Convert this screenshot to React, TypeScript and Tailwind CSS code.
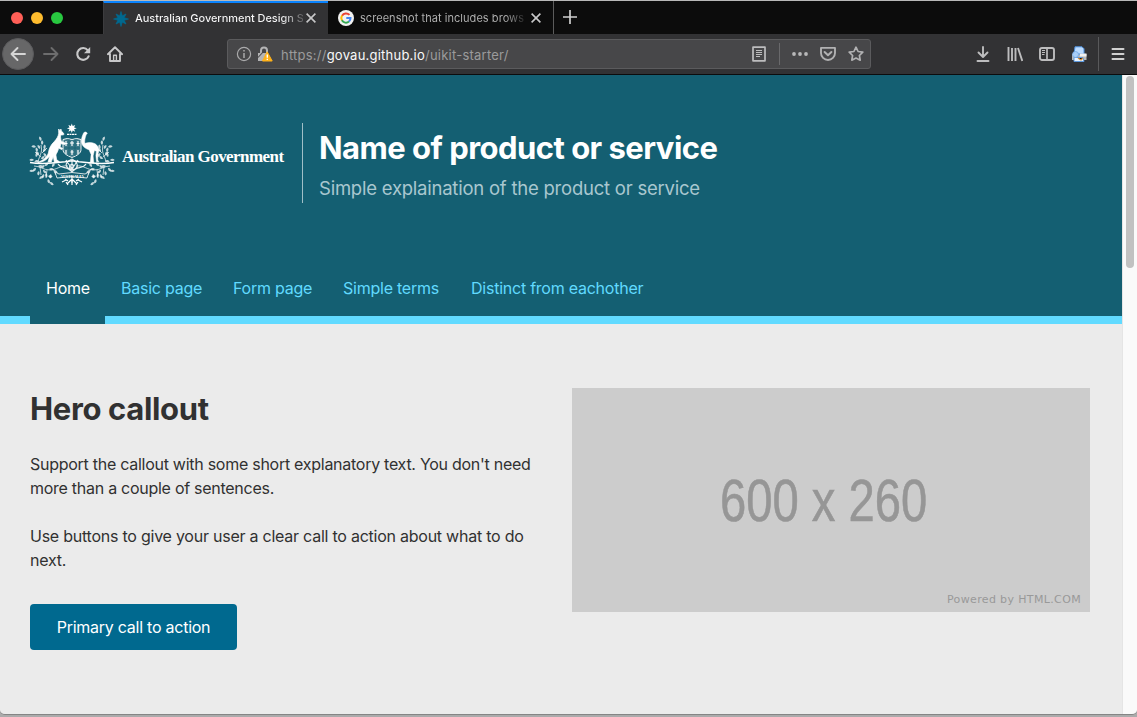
import React from "react";

const leaf = "M0 0c1-2 3-2.4 4.400-1.600C3.800 .6 1.800 1.200 0 0Z";
const sprigs: [number, number, number][] = [
  [36, 156, -60], [39, 154, -110], [41, 158, -20], [37, 151, -80], [40, 148, -100], [36, 146, -150], [42, 144, -70],
  [43, 151, -40], [39, 160, 190], [46, 156, -100], [34, 159, 200], [41, 140, -90], [44, 148, -60],
  [36, 167, 150], [39, 170, 120], [43, 169, 60], [46, 172, 100], [49, 168, 20], [51, 173, 120], [43, 175, 160],
  [48, 178, 90], [52, 166, -40], [34, 170, 200], [54, 169, 60], [45, 165, -30], [50, 181, 60],
  [38, 165, 20], [41, 167, -20], [48, 175, 30], [44, 173, 130],
];

function CoatOfArms() {
  const side = (
    <g>
      <path d="M34 165c6 0 9 4 16 4s10-5 18-4M38 161c1-6 5-9 3-17M41 156l-6-5M42 152l5-5M40 166l1 8M47 169l-1 8M53 168l3 6" fill="none" stroke="white" strokeWidth=".7" />
      {sprigs.map(([x, y, r], i) => (
        <path key={i} d={leaf} fill="white" opacity=".75" transform={`translate(${x} ${y}) rotate(${r})`} />
      ))}
    </g>
  );
  return (
    <svg viewBox="29 122 86 64" className="h-16 w-[86px] shrink-0" aria-label="Commonwealth Coat of Arms">
      {side}
      <g transform="translate(144 0) scale(-1 1)">{side}</g>
      <path d="M71.800 122.500l.9 2.600 2.500-1.200-1.100 2.500 2.600.9-2.600.9 1.100 2.500-2.500-1.100-.9 2.500-.9-2.500-2.500 1.100 1.100-2.500-2.600-.9 2.600-.9-1.100-2.500 2.500 1.200z" fill="white" />
      <path d="M67 133.300h10" stroke="white" strokeWidth="1.300" strokeDasharray="2 .5" />
      <path d="M63 138.500q4-2 9 0q5-2 9 0v10c0 4-4 6-9 8c-5-2-9-4-9-8z" fill="#3a7889" stroke="white" strokeWidth=".9" />
      <path d="M64 147h16M69 138v17M75 138v17" stroke="#145f72" strokeWidth=".8" />
      <path d="M66 140v5M64.500 142.500h3M72 140v5M70 142h4M78 140v5M76.500 142.500h3M66 149v4M72 149v5M78 149v4M70.500 151h3" stroke="white" strokeWidth="1.200" />
      <path d="M58.600 128l1.500 1.700.8-1.700.6 2.300c1.200.7 2.200 1.900 2.600 3-.8.9-2.200.6-3.300.6-.5 1.500-.2 3.800.5 6.400l4 1.800-.4 1.400-4-.8-.8 3.300 2.600 1.500-.8 1-3.300-1.200c-.6 3-1.900 4.600-2.700 6.600l.7 4.700 3 2.300h-5.300l-1-5.400-2.100 5.600h-3.200l1.700-6c-3 3.600-6 6-12 6.400 6-2.500 9-5.500 10.700-9.500.5-4.600 2.600-8.200 5.700-11.200 2.500-2.800 4.100-5 4.600-8.500z" fill="white" stroke="white" strokeWidth=".7" />
      <path d="M87.300 132.600c-.3-1.800-2.900-2.300-3.700-.6-2.200 4.300-2.900 8.300-1.600 11.300 1.200 3 4.500 4.800 7 5.400l2.100 4.700-.7 7.400-2 1.300h5.400l-.7-7.200 1.300-5.400 2 .7-.5 4.500.7 6.100h2.400l-1.300-1.700.3-6.200 1-3.300c-.3-4.600-3.600-7.900-8.600-8-2.500 0-4.200.4-5.500 1-.6-3 .2-5.600 1.200-8.800z" fill="white" stroke="white" strokeWidth=".5" />
      <path d="M30 161.500q10 2 25 .3l10-1 7-1 7 1 10 1q15 1.700 25-.3" fill="none" stroke="white" strokeWidth="1.500" />
      <path d="M72 158c-5 2-8 6-4 9s8-2 4-4c-4 2-3 7 3 5 5-3 1-8-3-10M72 160v22M66 159l6 9 6-9M58 163c4 6 9 1 14 8 5-7 10-2 14-8" fill="none" stroke="white" strokeWidth="1.100" opacity=".9" />
      <path d="M55 171l4 2q13-3 26 0l4-2-2 6q-15-3-30 0z" fill="#145f72" stroke="white" strokeWidth=".8" />
      <text x="72" y="176.600" textAnchor="middle" fontSize="4.500" textLength="24" fontWeight="700" fill="white" className="font-['Liberation_Serif']">AUSTRALIA</text>
      <path d="M72 178l-5 5M72 178l5 5M72 178v6M66 179l-4 2M78 179l4 2M68 184l-2-3M76 184l2-3M65 178l3 2M79 178l-3 2" stroke="white" strokeWidth="1.200" />
    </svg>
  );
}

const Close = () => (
  <svg viewBox="0 0 10 10" className="h-2.5 w-2.5 shrink-0 stroke-[#c8c8c9]" strokeWidth="1.600"><path d="M.6.6l8.800 8.800M9.400.6L.6 9.400" /></svg>
);

function Tabs() {
  return (
    <div className="flex h-[33px] bg-[#0c0c0c]">
      <div className="flex w-[103px] items-center gap-2 pt-px pl-[11px]">
        <i className="h-3 w-3 rounded-full bg-[#ff5f57]" />
        <i className="h-3 w-3 rounded-full bg-[#febc2e]" />
        <i className="h-3 w-3 rounded-full bg-[#28c840]" />
      </div>
      <div className="flex w-[225px] items-center border-t-2 border-l border-t-[#0a84ff] border-l-[#3c3c3e] bg-[#323234] pl-[9px]">
        <svg viewBox="-8 -8 16 16" className="h-4 w-4 shrink-0 fill-[#00698f] stroke-[#00698f]" strokeWidth=".7"><path d="M0-7.500l1.300 4.300L5-5 3.200-1.300 7.500 0 3.200 1.300 5 5 1.300 3.200 0 7.500-1.300 3.200-5 5-3.200 1.300-7.500 0-3.200-1.300-5-5-1.300-3.200z" /></svg>
        <div className="ml-1.5 w-[168px] whitespace-nowrap bg-[linear-gradient(90deg,#f9f9fa_146px,transparent_174px)] bg-clip-text text-[11px] font-medium tracking-[-0.050px] text-transparent">Australian Government Design S</div>
        <span className="ml-[3px] pb-px"><Close /></span>
      </div>
      <div className="flex w-[226px] items-center border-r border-[#5b5b5b] pt-px pl-2.5">
        <svg viewBox="0 0 16 16" className="h-4 w-4 shrink-0" fill="none" strokeWidth="2">
          <circle cx="8" cy="8" r="8" fill="#f2f2f2" />
          <path d="M11.500 4.900A4.700 4.700 0 0 0 4 5.700" stroke="#ea4335" />
          <path d="M4 5.500A4.700 4.700 0 0 0 4 10.400" stroke="#fbbc05" />
          <path d="M3.900 10.300A4.700 4.700 0 0 0 11 11.600" stroke="#34a853" />
          <path d="M11 11.600A4.700 4.700 0 0 0 12.500 8H8.300" stroke="#4285f4" />
        </svg>
        <div className="ml-1.5 w-[168px] whitespace-nowrap bg-[linear-gradient(90deg,#b5b5b5_145px,transparent_168px)] bg-clip-text text-[11px] tracking-[0.050px] text-transparent">screenshot that includes brows</div>
        <span className="ml-[3px]"><Close /></span>
      </div>
      <svg viewBox="0 0 14 14" className="mt-[9px] ml-[9px] h-3.5 w-3.5 stroke-[#d0d0d0]" strokeWidth="1.700"><path d="M7 0v14M0 7h14" /></svg>
    </div>
  );
}

function Glyph({ children, className = "" }: { children: React.ReactNode; className?: string }) {
  return (
    <svg viewBox="0 0 16 16" fill="none" stroke="#bdbdbe" strokeWidth="1.900" strokeLinecap="round" strokeLinejoin="round" className={`h-4 w-4 shrink-0 ${className}`}>{children}</svg>
  );
}

function Toolbar() {
  return (
    <div className="flex h-[41px] items-center border-b border-[#0c0c0d] bg-[#323234]">
      <div className="ml-0.5 flex h-8 w-8 items-center justify-center rounded-full border border-[#5a5a5c] bg-[#676768]">
        <Glyph><path d="M15 8H1.500M7.500 2l-6 6 6 6" stroke="#d6d6d6" /></Glyph>
      </div>
      <Glyph className="ml-[9px]"><path d="M1 8h13.500M8.500 2l6 6-6 6" stroke="#6d6d6e" /></Glyph>
      <Glyph className="ml-4"><path d="M13.600 10.300A5.900 5.900 0 1 1 12.800 4.300" stroke="#c8c8c9" strokeWidth="2.100" /><path d="M15.200 1v6.200H9z" fill="#c8c8c9" stroke="none" /></Glyph>
      <Glyph className="ml-4"><path d="M.9 8.200L8 1.300l7.100 6.900M3 8v7h10V8" stroke="#c8c8c9" strokeWidth="1.900" /><path d="M6.600 15V9.200h2.800V15" stroke="#c8c8c9" strokeWidth="1.400" /></Glyph>
      <div className="ml-[104px] flex h-[30px] w-[644px] items-center rounded-[3px] border border-[#5b5b5d] bg-[#474749]">
        <svg viewBox="0 0 16 16" className="ml-2 h-4 w-4" fill="none" stroke="#aaaaab"><circle cx="8" cy="8" r="6.600" strokeWidth="1.200" /><path d="M8 7v5M8 4v1.600" strokeWidth="1.500" /></svg>
        <svg viewBox="0 0 16 16" className="ml-[5px] h-4 w-4"><path d="M4 8V4.500a3 3 0 0 1 6 0V7" fill="none" stroke="#b4b4b5" strokeWidth="2" /><path d="M1 7H11v8H1z" fill="#b4b4b5" /><path d="M1 11.500L7 5" stroke="#474749" strokeWidth="1.100" /><path d="M10.200 5.800L15.200 15H5.500z" fill="#ffb21a" stroke="#ffb21a" strokeLinejoin="round" /><path d="M10.300 8.500v3.200M10.300 12.800v1.300" stroke="white" strokeWidth="1.400" /></svg>
        <div className="ml-2 w-[470px] whitespace-nowrap pt-[3px] text-[13px] tracking-[0.230px] text-[#9b9b9c]">https://<span className="text-[#f9f9fa]">govau.github.io</span>/uikit-starter/</div>
        <Glyph><path d="M2 1.200h12v13.600H2z" strokeWidth="1.700" /><path d="M5 4.500h6M5 6.500h6M5 8.500h6M5 10.500h4" strokeWidth="1" strokeLinecap="butt" /></Glyph>
        <i className="ml-3 h-[22px] w-px bg-[#69696b]" />
        <svg viewBox="0 0 16 16" className="ml-3 h-4 w-4 fill-[#b8b8b9]"><circle cx="2" cy="8" r="1.900" /><circle cx="8" cy="8" r="1.900" /><circle cx="14" cy="8" r="1.900" /></svg>
        <Glyph className="ml-3"><path d="M1 1.900h14V7A7 7 0 0 1 1 7z" stroke="#b1b1b2" /><path d="M4.600 6L8 9.200 11.400 6" stroke="#b1b1b2" strokeWidth="2" /></Glyph>
        <Glyph className="ml-3"><path d="M8 1.200l2.100 4.300 4.700.7-3.400 3.300.8 4.700L8 12l-4.200 2.200.8-4.700L1.200 6.200l4.700-.7z" stroke="#b1b1b2" strokeWidth="1.700" /></Glyph>
      </div>
      <Glyph className="ml-[104px]"><path d="M8 1v9.500M3.500 6.500L8 11l4.500-4.500M2.500 15h11" /></Glyph>
      <Glyph className="ml-4"><path d="M1.500 1v14M5 2v13M8.500 2v13M11 2l4.300 13" strokeWidth="1.900" strokeLinecap="butt" /></Glyph>
      <Glyph className="ml-4"><rect x="1" y="2" width="14" height="12" rx="2" /><path d="M8 2v12" strokeWidth="1.700" /><path d="M3 4.500h3M3 6.500h3M3 8.500h2.500" strokeWidth="1" strokeLinecap="butt" /></Glyph>
      <svg viewBox="0 0 16 16" className="ml-4 h-4 w-4 shrink-0"><path d="M1 8h14.500v6H1z" fill="#b9b9b9" /><path d="M4 .8h7l2 2V8H3z" fill="#bcdcff" stroke="#4c8fdc" /><path d="M9 7.500h6.500v3H9z" fill="#f1f1f1" /><path d="M3 11.500h9l1 4H3z" fill="#eaf4ff" stroke="#5d99de" /><path d="M7 12l3 2 2-2" stroke="#d8923d" strokeWidth="1.300" /><circle cx="4.500" cy="8.500" r="3" fill="#a8cef8" stroke="#73a9e5" strokeWidth=".8" /></svg>
      <i className="ml-[11px] h-[34px] w-px bg-[#59595b]" />
      <Glyph className="ml-[11px]"><path d="M2.500 3h11M2.500 8h11M2.500 13h11" stroke="#d0d0d0" strokeWidth="2" /></Glyph>
    </div>
  );
}

function Header() {
  return (
    <header className="flex h-[249px] flex-col justify-between bg-[#145f72]">
      <div className="flex pt-12 pl-[29px]">
        <div className="flex h-20 w-[274px] border-r border-[#a1bfc7]">
          <CoatOfArms />
          <span className="ml-[7px] pt-[22px] whitespace-nowrap font-['Liberation_Serif',serif] text-[17px] leading-6 font-bold tracking-[-0.560px] text-white">Australian Government</span>
        </div>
        <div className="pl-4 whitespace-nowrap">
          <h1 className="mt-[5px] text-[31px] leading-10 font-bold tracking-[-0.530px] text-white">Name of product or service</h1>
          <p className="mt-1.5 text-[18.500px] leading-7 tracking-[-0.230px] text-[#a9c7cf]">Simple explaination of the product or service</p>
        </div>
      </div>
      <nav className="flex h-16 text-base leading-6 tracking-[-0.240px] whitespace-nowrap text-[#61daff]">
        <i className="w-[30px] border-b-8 border-[#61daff]" />
        <a className="w-[75px] pt-4 pl-4 text-white">Home</a>
        <div className="flex flex-1 border-b-8 border-[#61daff] pt-4">
          <a className="ml-4 w-28">Basic page</a>
          <a className="w-[110px]">Form page</a>
          <a className="w-32">Simple terms</a>
          <a>Distinct from eachother</a>
        </div>
      </nav>
    </header>
  );
}

function Hero() {
  return (
    <main className="flex flex-1 bg-[#ebebeb] pt-16 pl-[30px] text-[#313131]">
      <section className="w-[542px] whitespace-nowrap text-base leading-6 tracking-[-0.250px]">
        <h2 className="mt-px text-[31px] leading-10 font-bold tracking-[-0.350px]">Hero callout</h2>
        <p className="mt-[23px] tracking-[-0.270px]">Support the callout with some short explanatory text. You don't need<br />more than a couple of sentences.</p>
        <p className="mt-6 tracking-[-0.240px]">Use buttons to give your user a clear call to action about what to do<br />next.</p>
        <button className="mt-8 flex h-[46px] w-[207px] items-center justify-center rounded bg-[#00698f] text-white">Primary call to action</button>
      </section>
      <figure className="flex h-56 w-[518px] flex-col items-end bg-[#cccccc]">
        <div className="flex h-[200px] w-full justify-center pt-[83px] pr-3.5">
          <span className="scale-x-[0.800] whitespace-nowrap font-['Liberation_Sans',sans-serif] text-[59px] leading-[60px] text-[#969696] [-webkit-text-stroke:0.6px_#969696]">600 x 260</span>
        </div>
        <figcaption className="pr-[9px] font-['DejaVu_Sans',sans-serif] text-[11px] leading-6 tracking-[0.360px] text-[#999999]">Powered by HTML.COM</figcaption>
      </figure>
    </main>
  );
}

export default function App() {
  return (
    <div className="h-[717px] w-[1137px] overflow-hidden bg-[#ababab] font-['Inter',sans-serif]">
      <div className="flex h-[715px] flex-col overflow-hidden rounded-b-[5px] border-t border-b border-t-[#b9b9b9] border-b-[#858585]">
        <Tabs />
        <Toolbar />
        <div className="flex min-h-0 flex-1">
          <div className="flex w-[1122px] flex-col"><Header /><Hero /></div>
          <div className="w-[15px] border-l border-[#e5e5e5] bg-[#fafafa] pt-px pl-[3px]"><div className="h-[192px] w-2 rounded-full bg-[#c1c1c1]" /></div>
        </div>
      </div>
    </div>
  );
}
